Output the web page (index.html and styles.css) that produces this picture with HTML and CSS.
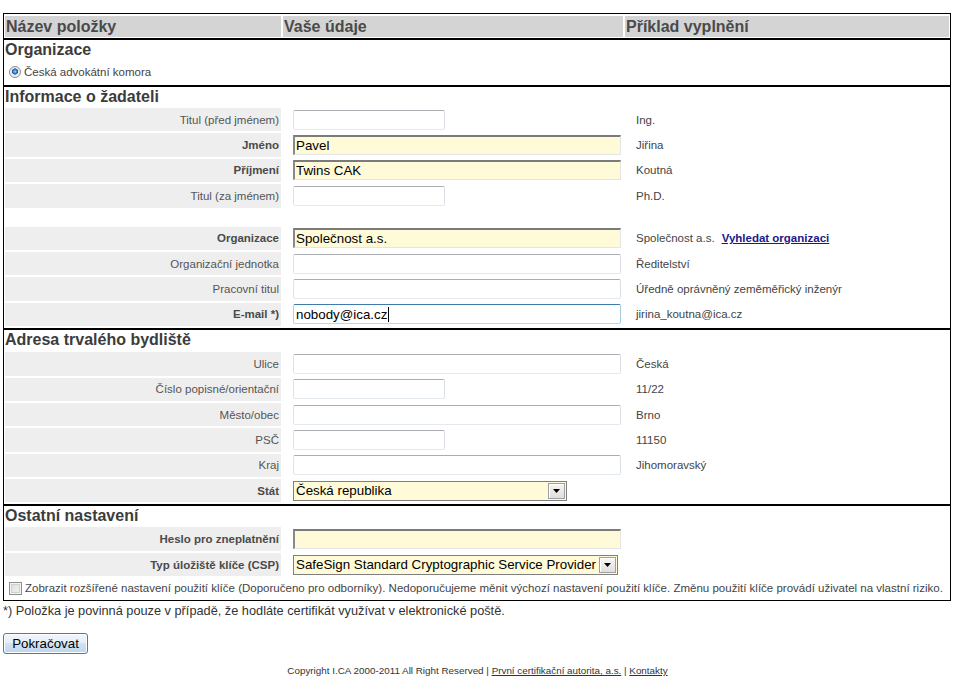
FILE: index.html
```html
<!DOCTYPE html>
<html lang="cs">
<head>
<meta charset="utf-8">
<title>Žádost o certifikát</title>
<link rel="stylesheet" href="styles.css">
</head>
<body>
<form class="frame">
  <div class="grid head">
    <div class="hcell">Název položky</div>
    <div class="hcell">Vaše údaje</div>
    <div class="hcell">Příklad vyplnění</div>
  </div>

  <section class="sec">
    <h2 class="sec-title">Organizace</h2>
    <label class="opt-row"><input type="radio" class="radio" name="org" checked><span>Česká advokátní komora</span></label>
  </section>

  <section class="sec">
    <h2 class="sec-title">Informace o žadateli</h2>
    <div class="grid row">
      <div class="lbl">Titul (před jménem)</div>
      <div class="val"><input class="inp short" type="text"></div>
      <div class="ex">Ing.</div>
    </div>
    <div class="grid row">
      <div class="lbl req">Jméno</div>
      <div class="val"><input class="inp long must" type="text" value="Pavel"></div>
      <div class="ex">Jiřina</div>
    </div>
    <div class="grid row">
      <div class="lbl req">Příjmení</div>
      <div class="val"><input class="inp long must" type="text" value="Twins CAK"></div>
      <div class="ex">Koutná</div>
    </div>
    <div class="grid row">
      <div class="lbl">Titul (za jménem)</div>
      <div class="val"><input class="inp short" type="text"></div>
      <div class="ex">Ph.D.</div>
    </div>
    <div class="spacer"></div>
    <div class="grid row">
      <div class="lbl req">Organizace</div>
      <div class="val"><input class="inp long must" type="text" value="Společnost a.s."></div>
      <div class="ex">Společnost a.s. <a class="find" href="#">Vyhledat organizaci</a></div>
    </div>
    <div class="grid row">
      <div class="lbl">Organizační jednotka</div>
      <div class="val"><input class="inp long" type="text"></div>
      <div class="ex">Ředitelství</div>
    </div>
    <div class="grid row">
      <div class="lbl">Pracovní titul</div>
      <div class="val"><input class="inp long" type="text"></div>
      <div class="ex">Úředně oprávněný zeměměřický inženýr</div>
    </div>
    <div class="grid row">
      <div class="lbl req">E-mail *)</div>
      <div class="val"><span class="inp long focus"><span class="typed">nobody@ica.cz</span><span class="caret"></span></span></div>
      <div class="ex">jirina_koutna@ica.cz</div>
    </div>
  </section>

  <section class="sec">
    <h2 class="sec-title tall">Adresa trvalého bydliště</h2>
    <div class="grid row">
      <div class="lbl">Ulice</div>
      <div class="val"><input class="inp long" type="text"></div>
      <div class="ex">Česká</div>
    </div>
    <div class="grid row">
      <div class="lbl">Číslo popisné/orientační</div>
      <div class="val"><input class="inp short" type="text"></div>
      <div class="ex">11/22</div>
    </div>
    <div class="grid row">
      <div class="lbl">Město/obec</div>
      <div class="val"><input class="inp long" type="text"></div>
      <div class="ex">Brno</div>
    </div>
    <div class="grid row">
      <div class="lbl">PSČ</div>
      <div class="val"><input class="inp short" type="text"></div>
      <div class="ex">11150</div>
    </div>
    <div class="grid row">
      <div class="lbl">Kraj</div>
      <div class="val"><input class="inp long" type="text"></div>
      <div class="ex">Jihomoravský</div>
    </div>
    <div class="grid row">
      <div class="lbl req">Stát</div>
      <div class="val">
        <span class="sel sel-state"><select><option>Česká republika</option></select><span class="sel-btn"><svg width="7" height="4" viewBox="0 0 7 4"><path d="M0 0H7L3.5 4Z" fill="#000"/></svg></span></span>
      </div>
      <div class="ex"></div>
    </div>
  </section>

  <section class="sec">
    <h2 class="sec-title">Ostatní nastavení</h2>
    <div class="grid row">
      <div class="lbl req">Heslo pro zneplatnění</div>
      <div class="val"><input class="inp long must" type="password"></div>
      <div class="ex"></div>
    </div>
    <div class="grid row">
      <div class="lbl req">Typ úložiště klíče (CSP)</div>
      <div class="val">
        <span class="sel sel-csp"><select><option>SafeSign Standard Cryptographic Service Provider</option></select><span class="sel-btn"><svg width="7" height="4" viewBox="0 0 7 4"><path d="M0 0H7L3.5 4Z" fill="#000"/></svg></span></span>
      </div>
      <div class="ex"></div>
    </div>
    <label class="opt-row check-row"><input type="checkbox" class="check"><span>Zobrazit rozšířené nastavení použití klíče (Doporučeno pro odborníky). Nedoporučujeme měnit výchozí nastavení použití klíče. Změnu použití klíče provádí uživatel na vlastní riziko.</span></label>
  </section>
</form>

<p class="note">*) Položka je povinná pouze v případě, že hodláte certifikát využívat v elektronické poště.</p>

<button class="btn" type="button">Pokračovat</button>

<p class="footer">Copyright I.CA 2000-2011 All Right Reserved | <a href="#">První certifikační autorita, a.s.</a> | <a href="#">Kontakty</a></p>
</body>
</html>
```

FILE: styles.css
```css
html, body {
  margin: 0;
  padding: 0;
  background: #fff;
}

body {
  padding: 13px 0 0 3px;
  font-family: Arial, "Liberation Sans", Helvetica, sans-serif;
  font-size: 11.5px;
  color: #333;
}

.frame {
  box-sizing: border-box;
  width: 948px;
  margin: 0;
  border: 1px solid #000;
}

.grid {
  display: grid;
  grid-template-columns: 276px 340px 1fr;
  column-gap: 2px;
}

.head {
  padding: 2px 1px 1px;
}

.hcell {
  background: #d4d4d4;
  height: 21px;
  line-height: 21px;
  font-size: 16px;
  font-weight: bold;
  color: #4a4a4a;
  padding-left: 1px;
}

.sec {
  border-top: 2px solid #000;
  padding: 0 1px 2px;
  display: flex;
  flex-direction: column;
  gap: 2px;
}

.sec-title {
  margin: 0;
  height: 19px;
  line-height: 19px;
  font-size: 16px;
  font-weight: bold;
  color: #3c3c3c;
}

.sec-title.tall {
  height: 20px;
}

.opt-row {
  display: flex;
  align-items: center;
  height: 22px;
  padding-left: 4px;
  gap: 3px;
  color: #444;
  white-space: nowrap;
}

.check-row {
  height: 20px;
  font-size: 11.53px;
}

.radio {
  appearance: none;
  -webkit-appearance: none;
  flex: none;
  margin: 0;
  width: 12px;
  height: 12px;
  border-radius: 50%;
  border: 1px solid #8c8c8c;
  box-sizing: border-box;
  background: radial-gradient(circle at 50% 45%, #a9d6ff 0, #2f7fd6 25%, #1b4e9c 38%, #e8e8e8 45%, #fdfdfd 100%);
}

.check {
  appearance: none;
  -webkit-appearance: none;
  flex: none;
  margin: 0;
  width: 13px;
  height: 13px;
  box-sizing: border-box;
  border: 1px solid #8e8f8f;
  background: linear-gradient(135deg, #dcdcdc 0%, #f4f4f4 100%);
  box-shadow: inset 0 0 0 1px #f4f4f4, inset 0 0 0 2px #d0d0d0;
}

.row {
  height: 23.4px;
}

.lbl {
  background: #eeeeee;
  display: flex;
  align-items: center;
  justify-content: flex-end;
  padding-right: 2px;
  color: #555;
}

.lbl.req {
  font-weight: bold;
  color: #4a4a4a;
}

.val {
  display: flex;
  align-items: center;
  padding-left: 10px;
}

.ex {
  display: flex;
  align-items: center;
  padding-left: 11px;
  color: #444;
  white-space: nowrap;
}

.spacer {
  height: 15px;
}

.find {
  margin-left: 7px;
  font-weight: bold;
  color: #1a1a8a;
  text-decoration: underline;
}

.inp {
  box-sizing: border-box;
  height: 20px;
  margin: 0;
  padding: 0 2px;
  font-family: Arial, "Liberation Sans", sans-serif;
  font-size: 13.33px;
  color: #000;
  background: #fff;
  border: 1px solid;
  border-color: #abadb3 #dbdfe6 #e3e9ef #e2e3ea;
  border-radius: 2px;
  outline: none;
}

.inp.short {
  width: 152px;
}

.inp.long {
  width: 328px;
}

.inp.must {
  background: #fffad8;
  border-radius: 0;
  border-width: 2px 1px 1px 2px;
  border-color: #7b7b7b #e4e4e4 #e4e4e4 #8a8a8a;
  padding-left: 1px;
}

.inp.focus {
  display: inline-flex;
  align-items: center;
  border-color: #3d7bad #a4c9e3 #b7d9ed #b5cfe7;
  padding-left: 2px;
}

.caret {
  display: inline-block;
  width: 1px;
  height: 15px;
  background: #000;
  margin-left: 1px;
}

.sel {
  display: inline-flex;
  box-sizing: border-box;
  height: 20px;
  border: 1px solid #7f7f7f;
  background: #fffad8;
}

.sel-state {
  width: 274px;
}

.sel-csp {
  width: 325px;
}

.sel select {
  appearance: none;
  -webkit-appearance: none;
  flex: 1;
  min-width: 0;
  border: 0;
  margin: 0;
  padding: 0 2px;
  background: transparent;
  font-family: Arial, "Liberation Sans", sans-serif;
  font-size: 13.33px;
  color: #000;
  outline: none;
}

.sel-btn {
  box-sizing: border-box;
  width: 17px;
  margin: 1px;
  border: 1px solid #a0a0a0;
  background: linear-gradient(#f6f6f6, #dedede);
  box-shadow: inset 1px 1px 0 #fff;
  display: flex;
  align-items: center;
  justify-content: center;
}

.note {
  margin: 3px 0 0;
  font-size: 12.75px;
  line-height: 14px;
  color: #333;
}

.btn {
  display: block;
  margin-top: 15px;
  width: 85px;
  height: 21px;
  padding: 0;
  font-family: Arial, "Liberation Sans", sans-serif;
  font-size: 13.33px;
  color: #000;
  border: 1px solid #3c7fb1;
  border-radius: 3px;
  background: linear-gradient(#f0f6fb 0%, #e2eef8 50%, #cfe3f3 50%, #bcd7ee 100%);
  box-shadow: inset 0 0 0 1px #fff;
}

.footer {
  margin: 10px 0 0 -3px;
  text-align: center;
  font-size: 9.85px;
  line-height: 13px;
  color: #333;
}

.footer a {
  color: #333;
}
```
